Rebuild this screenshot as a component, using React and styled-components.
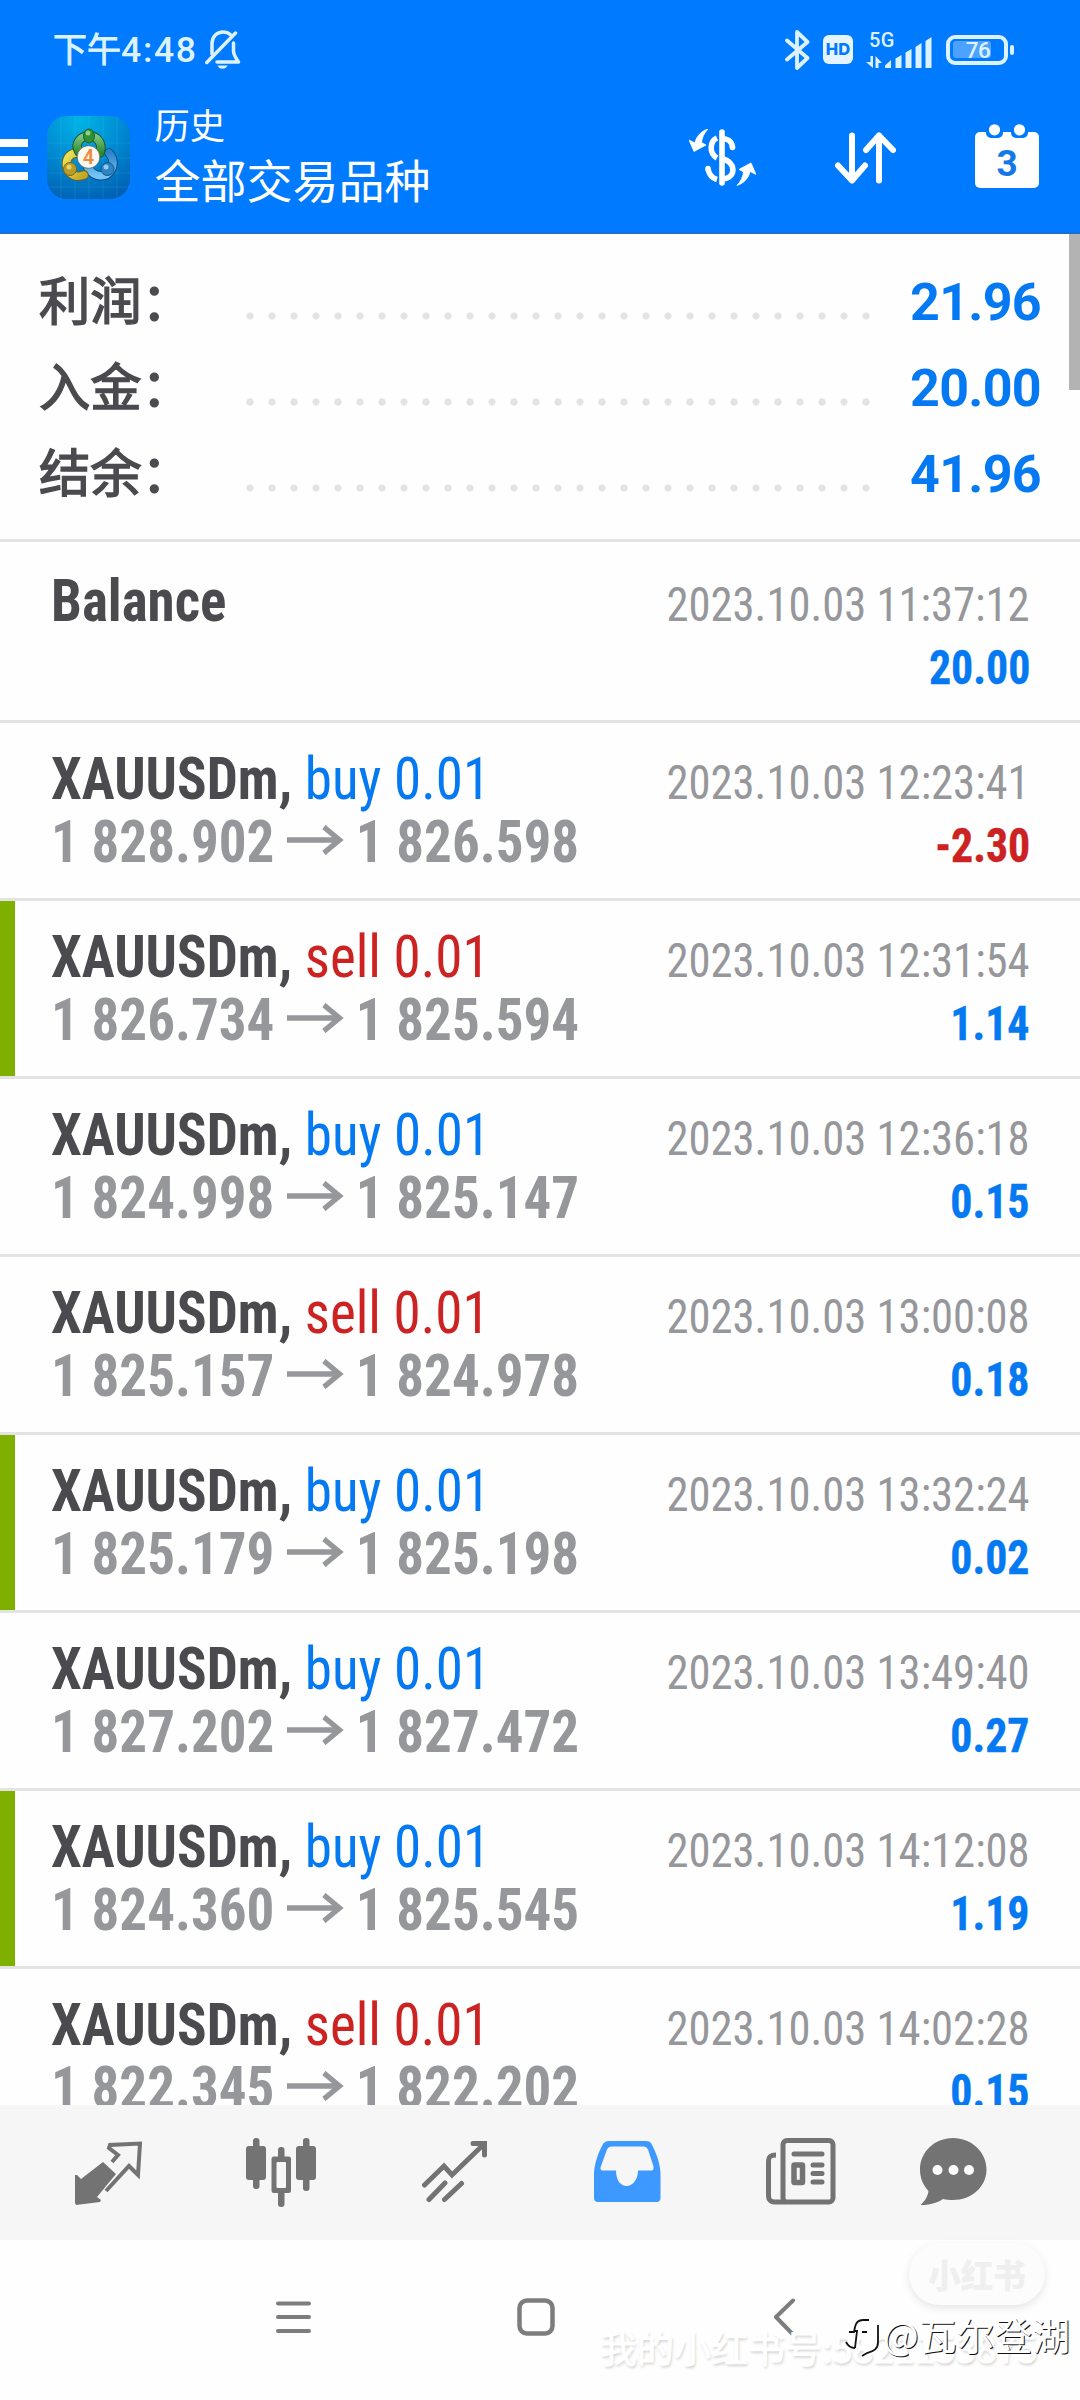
import React from 'react';
import styled, { createGlobalStyle } from 'styled-components';

const Global = createGlobalStyle`
  *{box-sizing:border-box}
  html,body{margin:0;padding:0;background:#fff}
  body{width:1080px;height:2400px;overflow:hidden;font-family:Roboto,"Noto Sans CJK SC",sans-serif}
  svg{display:block;flex:none}
`;
const BLUE = '#007aff';
const TEXT_BLUE = '#0579f2';
const RED = '#cc2222';

const Screen = styled.div`
  width:1080px;height:2400px;display:flex;flex-direction:column;background:#fefefe;position:relative;overflow:hidden;
`;
const Header = styled.header`
  height:234px;background:${BLUE};border-bottom:2px solid #1a6fd0;display:flex;flex-direction:column;color:#fff;
`;
const StatusBar = styled.div`
  height:98px;padding:1px 66px 0 53px;display:flex;align-items:center;color:#dcf2ff;
`;
const Clock = styled.div`
  font-size:34px;font-weight:400;line-height:40px;margin-right:7.5px;display:flex;align-items:center;
  -webkit-text-stroke:.9px #dcf2ff;
  b{font-size:35.5px;font-weight:500;letter-spacing:1.7px;-webkit-text-stroke:0}
`;
const Spacer = styled.div`flex:1;`;
const Hd = styled.div`
  width:30px;height:29px;border-radius:6px;background:#e6f4ff;color:${BLUE};margin:0 13px 0 13px;
  font:800 16.5px/29px Inter,Roboto,sans-serif;text-align:center;
`;
const Network = styled.div`
  width:68px;height:36px;margin-right:12px;display:flex;flex-direction:column;
  span{font-size:20px;font-weight:500;line-height:17px;height:17px;padding-left:3px;letter-spacing:.5px}
  svg{margin-top:-12px}
`;
const Battery = styled.div`
  width:62px;height:30px;border:4px solid #dcf2ff;border-radius:9px;display:flex;align-items:center;padding:0 2.5px;margin-right:2px;
  div{height:17px;width:38px;background:#4da2ff;border-radius:3px;display:flex;justify-content:flex-end}
  span{font:500 22.5px/18px Roboto,sans-serif;letter-spacing:-.4px}
`;
const Nub = styled.div`width:4px;height:10px;border-radius:2px;background:#dcf2ff;`;
const AppBar = styled.div`
  height:134px;display:flex;align-items:flex-start;
`;
const ActionBox = styled.div`width:${p => p.$w}px;padding-top:${p => p.$t}px;`;
const Burger = styled.div`
  width:28px;margin:41px 18.5px 0 0;display:flex;flex-direction:column;gap:9px;
  i{height:7.5px;background:#fff}
`;
const Titles = styled.div`
  margin-left:25px;display:flex;flex-direction:column;font-family:"Noto Sans CJK SC",sans-serif;
`;
const Sub = styled.div`font-size:35.3px;line-height:40px;margin-top:6px;`;
const Title = styled.div`font-size:46px;line-height:56px;margin-top:5.5px;`;

const Body = styled.main`
  height:1871px;overflow:hidden;position:relative;
`;
const Scroll = styled.div`
  position:absolute;right:0;top:0;width:11px;height:156px;background:#b3b3b3;
`;
const Summary = styled.section`
  height:308px;border-bottom:3px solid #e3e3e3;padding:23px 39px 0 39px;margin-bottom:3px;
`;
const SumRow = styled.div`
  height:86px;display:flex;align-items:center;
`;
const SumLabel = styled.div`
  width:199.5px;padding-bottom:4px;font:400 51.3px/82px "Noto Sans CJK SC",sans-serif;color:#4a4a4f;white-space:nowrap;
  -webkit-text-stroke:1.5px #4a4a4f;
`;
const Dots = styled.div`
  width:638px;height:22px;margin-top:32px;
  background:radial-gradient(circle at 11px 11px,#e3e3e3 3.2px,transparent 4px) 0 0/22px 22px repeat-x;
`;
const SumValue = styled.div`
  flex:1;text-align:right;font-size:52px;font-weight:700;line-height:86px;padding-top:5px;color:${TEXT_BLUE};letter-spacing:-.7px;
`;
const Row = styled.article`
  height:178px;border-bottom:3px solid #e3e3e3;display:flex;
`;
const Mark = styled.div`
  width:15px;height:175px;background:${p => (p.$on ? '#7fb000' : 'transparent')};
`;
const RowMain = styled.div`flex:1;padding:25px 50px 0 36px;`;
const Line = styled.div`
  height:63px;display:flex;justify-content:space-between;align-items:baseline;line-height:63px;white-space:nowrap;
  font-stretch:condensed;
`;
const Name = styled.div`
  font-size:59.5px;font-weight:700;color:#4a4a4f;transform:scaleX(.925);transform-origin:left;
`;
const Side = styled.span`font-weight:400;color:${p => (p.$sell ? RED : TEXT_BLUE)};`;
const Price = styled.div`
  font-size:59.5px;font-weight:700;color:#96979b;display:flex;align-items:center;gap:13px;
  transform:scaleX(.925);transform-origin:left;
  svg{margin-bottom:6px}
`;
const Time = styled.div`font-size:49px;color:#96979b;transform:scaleX(.911);transform-origin:right;`;
const Profit = styled.div`
  font-size:49px;font-weight:700;color:${p => (p.$neg ? RED : TEXT_BLUE)};transform:scaleX(.895);transform-origin:right;
  -webkit-text-stroke:.4px currentColor;
`;

const Tabs = styled.nav`
  height:135px;background:#f6f6f6;display:flex;padding:33px 0 0 75px;
`;
const Tab = styled.div`width:${p => p.$w}px;`;
const System = styled.footer`
  flex:1;display:flex;padding:58px 0 0 276px;position:relative;
`;
const SysKey = styled.div`width:${p => p.$w}px;padding-top:${p => p.$t}px;`;
const Pill = styled.div`
  position:absolute;left:909px;top:3px;width:136px;height:62px;border-radius:31px;background:#fcfcfc;
  box-shadow:0 3px 8px rgba(0,0,0,.1);color:#efefef;font:900 32.5px/61px "Noto Sans CJK SC",sans-serif;text-align:center;
`;
const Account = styled.div`
  position:absolute;left:600px;top:83px;font:400 37px/48px "Noto Sans CJK SC",sans-serif;color:#fff;white-space:nowrap;
  -webkit-text-stroke:1px #fff;text-shadow:1px 2px 3px rgba(0,0,0,.2);
`;
const Author = styled.div`
  position:absolute;left:845px;top:70px;display:flex;align-items:center;color:#fff;
  font:400 37.8px/48px "Noto Sans CJK SC",sans-serif;white-space:nowrap;text-shadow:1px 1px 0 #111;
`;

const BellOff = () => (
  <svg width="36" height="39" viewBox="0 0 36 39" fill="none" stroke="#dcf2ff" strokeWidth="3.5" strokeLinecap="round" strokeLinejoin="round">
    <path d="M7 24V13.500C7 6.500 12 2 18 2c3 0 5.500 1 7.500 2.800M28.500 13v8c0 4 2.500 7 5 11H12" />
    <path d="M30.500 3 1.800 32.500" />
    <path d="M12.500 35.500h10c-1 2.200-2.700 3.300-5 3.300s-4-1.100-5-3.300z" fill="#dcf2ff" stroke="none" />
  </svg>
);
const Bluetooth = () => (
  <svg width="25" height="40" viewBox="0 0 25 40" fill="none" stroke="#dcf2ff" strokeWidth="3.800" strokeLinejoin="round" strokeLinecap="round">
    <path d="M2 10.500 22.500 28 12 38V2l10.500 10L2 29.500" />
  </svg>
);
const Signal = () => (
  <svg width="68" height="31" viewBox="0 0 68 31" fill="#dcf2ff">
    <path d="M4.500 19h2.500v12L0 25h4.500zM9.500 31V19l6.500 7h-3.500v5z" />
    <path d="M19 28.500 25 23v8h-6zM29.500 21.500 35.500 18v13h-6zM39.500 15.500 45.500 12v19h-6zM49.500 10 55.500 6v25h-6zM59.500 4 65.500 0v31h-6z" />
  </svg>
);
const LogoBox = styled.div`padding-top:18px;`;
const Logo = () => (
  <LogoBox>
    <svg width="83" height="83" viewBox="0 0 83 83">
      <defs>
        <radialGradient id="lg" cx=".4" cy=".05" r="1"><stop offset="0" stopColor="#00b4e6" /><stop offset=".5" stopColor="#008bd2" /><stop offset="1" stopColor="#0061b4" /></radialGradient>
        <linearGradient id="g" x2="0" y2="1"><stop offset="0" stopColor="#7cc584" /><stop offset="1" stopColor="#2c8a2c" /></linearGradient>
        <linearGradient id="y" x2="1" y2="1"><stop offset="0" stopColor="#ece45c" /><stop offset="1" stopColor="#c4a626" /></linearGradient>
        <linearGradient id="b" x2="0" y2="1"><stop offset="0" stopColor="#2c84cb" /><stop offset="1" stopColor="#72c5f5" /></linearGradient>
      </defs>
      <rect width="83" height="83" rx="20" fill="url(#lg)" />
      <path d="M14 0v83M28 0v83M42 0v83M56 0v83M70 0v83M0 27h83M0 42h83M0 57h83M0 71h83" stroke="#7fd6f7" strokeOpacity=".13" />
      <g fill="none" strokeLinecap="round">
        <path d="M62 37c5 5 5 12 2 17-5 8-16 8-23-2" stroke="#0d4a80" strokeWidth="9.500" />
        <path d="M62 37c5 5 5 12 2 17-5 8-16 8-23-2" stroke="url(#b)" strokeWidth="7.500" />
        <path d="M29 37c-8 1-11 8-9 15 3 7 9 10 17 7" stroke="#6b6219" strokeWidth="9.500" />
        <path d="M29 37c-8 1-11 8-9 15 3 7 9 10 17 7" stroke="url(#y)" strokeWidth="7.500" />
        <path d="M32 36c-5-8 1-16 10-16s14 8 11 17" stroke="#1d5a2c" strokeWidth="9.500" />
        <path d="M32 36c-5-8 1-16 10-16s14 8 11 17" stroke="url(#g)" strokeWidth="7.500" />
      </g>
      <ellipse cx="42" cy="20" rx="5.500" ry="7" fill="#2f8f35" stroke="#1c6230" /><ellipse cx="41" cy="17" rx="2.500" ry="2.500" fill="#8fd08c" />
      <circle cx="23" cy="53" r="6.500" fill="#b89d26" stroke="#7a6a18" /><circle cx="22" cy="51" r="2.500" fill="#e3d374" />
      <circle cx="60.500" cy="53" r="6.500" fill="#2f84c4" stroke="#0f5590" /><circle cx="59" cy="51" r="2.500" fill="#8ecdf3" />
      <circle cx="41.500" cy="41" r="11.300" fill="#fbf8f2" stroke="#54604a" strokeWidth=".7" />
      <text x="41.500" y="48" textAnchor="middle" fontFamily="Roboto" fontWeight="600" fontSize="20" fill="#f08a3c">4</text>
    </svg>
  </LogoBox>
);
const ARROW = 'M19 0C12 2 7 8 6 14L0 11 5 22.500 17 16 12.500 13.500C13 9 15 4 19 0z';
const Dollar = () => (
  <svg width="67" height="57" viewBox="0 0 67 57" fill="none" stroke="#fff">
    <path d="M33 3v51" strokeWidth="5.600" strokeLinecap="round" />
    <path d="M33 9.500c5 0 10 2.500 10.500 9M28 9c-7 3-8.500 15 0 20M33 29.500c15 4 14 20 0 20.500M19 40c1 5 4 9 9 10.500" strokeWidth="5.600" />
    <path d="M43.500 18v.5M19 39.500v.5" strokeWidth="5.600" strokeLinecap="round" />
    <g fill="#fff" stroke="#fff" strokeWidth=".8" strokeLinejoin="round"><path d={ARROW} /><path d={ARROW} transform="rotate(180 33.500 28.200)" /></g>
  </svg>
);
const Sort = () => (
  <svg width="61" height="52" viewBox="0 0 61 52" fill="none" stroke="#fff" strokeWidth="6" strokeLinecap="round" strokeLinejoin="round">
    <path d="M17 3.500v45M3 33.500l14 15 13-15M44 48.500v-45M31 18 44 3.500 58 18" />
  </svg>
);
const Calendar = () => (
  <svg width="64" height="64" viewBox="0 0 64 64">
    <rect y="8" width="64" height="56" rx="5" fill="#fff" />
    <path d="M11 7h17v2a5 5 0 0 1-5 5h-7a5 5 0 0 1-5-5zM36 7h17v2a5 5 0 0 1-5 5h-7a5 5 0 0 1-5-5z" fill={BLUE} />
    <circle cx="19.500" cy="5.800" r="5.600" fill="#fff" /><circle cx="44.500" cy="5.800" r="5.600" fill="#fff" />
    <text x="32" y="51.500" textAnchor="middle" fontFamily="Roboto" fontWeight="700" fontSize="37" fill="#1479e6">3</text>
  </svg>
);
const Arrow = () => (
  <svg width="62" height="30" viewBox="0 0 62 30" fill="none" stroke="#96979b" strokeWidth="5.400">
    <path d="M0 15h57M40 2l17 13-17 13" />
  </svg>
);

const G = '#737373';
const tabs = [
  [171, <svg width="67" height="68" viewBox="0 0 67 68"><path d="M28 24 41 36 22 59l4 3-1 2-24 3-1-2V37l2 0 4 4z" fill={G} /><path d="M37 24 43 17 34 10 35 7 65 5.500 63 37 54 28 31 53" fill="none" stroke={G} strokeWidth="4" /></svg>],
  [176, <svg width="71" height="70" viewBox="0 0 71 70" fill={G}><rect y="8" width="20" height="34" rx="3" /><rect x="7" width="6.500" height="51" rx="3" /><rect x="50" y="8" width="20" height="34" rx="3" /><rect x="57" width="6.500" height="53" rx="3" /><rect x="32" y="9" width="6.500" height="60" rx="3" /><rect x="25.500" y="18.500" width="19.500" height="36.500" rx="2.500" /><rect x="30.500" y="24" width="9.500" height="26" rx="1" fill="#f6f6f6" /></svg>],
  [172, <svg width="66" height="68" viewBox="0 0 66 68" fill="none" stroke={G} strokeWidth="5" strokeLinecap="round"><path d="M2.500 47 22 28l8 9L62 6M51 5.500h11.500V17M7 61.500 23 45M22.500 61.500 39.500 45.500" /></svg>],
  [172, <svg width="67" height="68" viewBox="0 0 67 68"><path d="M15 3h37c3 0 5 1 6 4 5 9 8 19 8.500 28v25c0 2.500-1.500 4-4 4H4c-2.500 0-4-1.500-4-4V35C.5 26 4 15 8.500 7c1.500-3 3.500-4 6.500-4z" fill="#3d99ff" /><path d="M18 8.500h31c2.500 0 4 1 5 3l5.500 17c.5 2-.3 4-2 4H44c0 10-6 15.500-11.500 15.500S22 43 22 32.500H8.500c-1.500 0-2.500-1.500-2-3L13 11.500c1-2 2.500-3 5-3z" fill="#f6f6f6" /></svg>],
  [154, <svg width="70" height="68" viewBox="0 0 70 68" fill="none" stroke={G} strokeWidth="5"><rect x="17" y="2.500" width="50" height="61.500" rx="4" /><path d="M10 17C5 17 2.500 18 2.500 23v35c0 4 2.500 6 6 6H20" /><path d="M28 16h28M47 27h9M47 35.500h9M47 44h9" strokeLinecap="round" /><rect x="28" y="27" width="8.500" height="17.500" rx=".5" strokeWidth="5.500" /></svg>],
  [70, <svg width="67" height="68" viewBox="0 0 67 68"><path d="M33 0c18.500 0 33.500 14 33.500 31.500S51.500 62 33 62c-3.500 0-7-.3-10-1C17 65 9 67 .5 67 5 63 8 58 8.500 53 3 47 0 40 0 31.500 0 14 14.500 0 33 0z" fill={G} /><g fill="#fff"><circle cx="17.500" cy="32" r="5" /><circle cx="33.500" cy="32" r="5" /><circle cx="49" cy="32" r="5" /></g></svg>],
];

const summary = [['利润：', '21.96'], ['入金：', '20.00'], ['结余：', '41.96']];
const deals = [
  [0, 0, '1 828.902', '1 826.598', '12:23:41', '-2.30'],
  [1, 1, '1 826.734', '1 825.594', '12:31:54', '1.14'],
  [0, 0, '1 824.998', '1 825.147', '12:36:18', '0.15'],
  [0, 1, '1 825.157', '1 824.978', '13:00:08', '0.18'],
  [1, 0, '1 825.179', '1 825.198', '13:32:24', '0.02'],
  [0, 0, '1 827.202', '1 827.472', '13:49:40', '0.27'],
  [1, 0, '1 824.360', '1 825.545', '14:12:08', '1.19'],
  [0, 1, '1 822.345', '1 822.202', '14:02:28', '0.15'],
];

export default function App() {
  return (
    <Screen>
      <Global />
      <Header>
        <StatusBar>
          <Clock>下午<b>4:48</b></Clock>
          <BellOff />
          <Spacer />
          <Bluetooth />
          <Hd>HD</Hd>
          <Network><span>5G</span><Signal /></Network>
          <Battery><div><span>76</span></div></Battery>
          <Nub />
        </StatusBar>
        <AppBar>
          <Burger><i /><i /><i /></Burger>
          <Logo />
          <Titles><Sub>历史</Sub><Title>全部交易品种</Title></Titles>
          <Spacer />
          <ActionBox $w={146} $t={31}><Dollar /></ActionBox>
          <ActionBox $w={140} $t={34}><Sort /></ActionBox>
          <ActionBox $w={105} $t={26}><Calendar /></ActionBox>
        </AppBar>
      </Header>
      <Body>
        <Summary>
          {summary.map(([k, v]) => (
            <SumRow key={k}><SumLabel>{k}</SumLabel><Dots /><SumValue>{v}</SumValue></SumRow>
          ))}
        </Summary>
        <Row>
          <Mark />
          <RowMain>
            <Line><Name>Balance</Name><Time>2023.10.03 11:37:12</Time></Line>
            <Line><Price>&nbsp;</Price><Profit>20.00</Profit></Line>
          </RowMain>
        </Row>
        {deals.map(([mark, sell, from, to, time, profit]) => (
          <Row key={time}>
            <Mark $on={mark} />
            <RowMain>
              <Line>
                <Name>XAUUSDm, <Side $sell={sell}>{sell ? 'sell' : 'buy'} 0.01</Side></Name>
                <Time>2023.10.03 {time}</Time>
              </Line>
              <Line>
                <Price>{from}<Arrow />{to}</Price>
                <Profit $neg={profit[0] === '-'}>{profit}</Profit>
              </Line>
            </RowMain>
          </Row>
        ))}
        <Scroll />
      </Body>
      <Tabs>{tabs.map(([w, icon], i) => <Tab key={i} $w={w}>{icon}</Tab>)}</Tabs>
      <System>
        <SysKey $w={241} $t={3}><svg width="36" height="34" viewBox="0 0 36 34" stroke="#7d7d7d" strokeWidth="4" strokeLinecap="round"><path d="M2 2.500h31M2 16h31M2 30h31" /></svg></SysKey>
        <SysKey $w={256} $t={0}><svg width="38" height="38" viewBox="0 0 38 38" fill="none" stroke="#7d7d7d" strokeWidth="4.500"><rect x="2.500" y="2.500" width="33" height="33" rx="7.500" /></svg></SysKey>
        <SysKey $w={30} $t={0}><svg width="24" height="38" viewBox="0 0 24 38" fill="none" stroke="#7d7d7d" strokeWidth="4" strokeLinecap="round" strokeLinejoin="round"><path d="M20 2.500 3 19l16 16.500" /></svg></SysKey>
        <Account>我的小红书号:5821153875</Account>
        <Pill>小红书</Pill>
        <Author>
          <svg width="38" height="46" viewBox="0 0 38 46"><path d="M12 18C6 20 4 27 2 30c2 4 5 6 10 6l3-14 2 14c1 3 3 5 1 9 6-5 14-5 15-14V18c0-6-2-9-8-9h-5c-5 0-7 3-8 9z" fill="#fff" /><path d="M4 21h5l1-5c1-5 4-7 8-7h6M10 20h2l-2 17M1 31c2 4 5 6 9 6M33 14v17c0 8-5 9-11 11l-5 3" fill="none" stroke="#111" strokeWidth="1.800" /><path d="M17 21h5" stroke="#111" strokeWidth="2" /></svg>
          @瓦尔登湖
        </Author>
      </System>
    </Screen>
  );
}
